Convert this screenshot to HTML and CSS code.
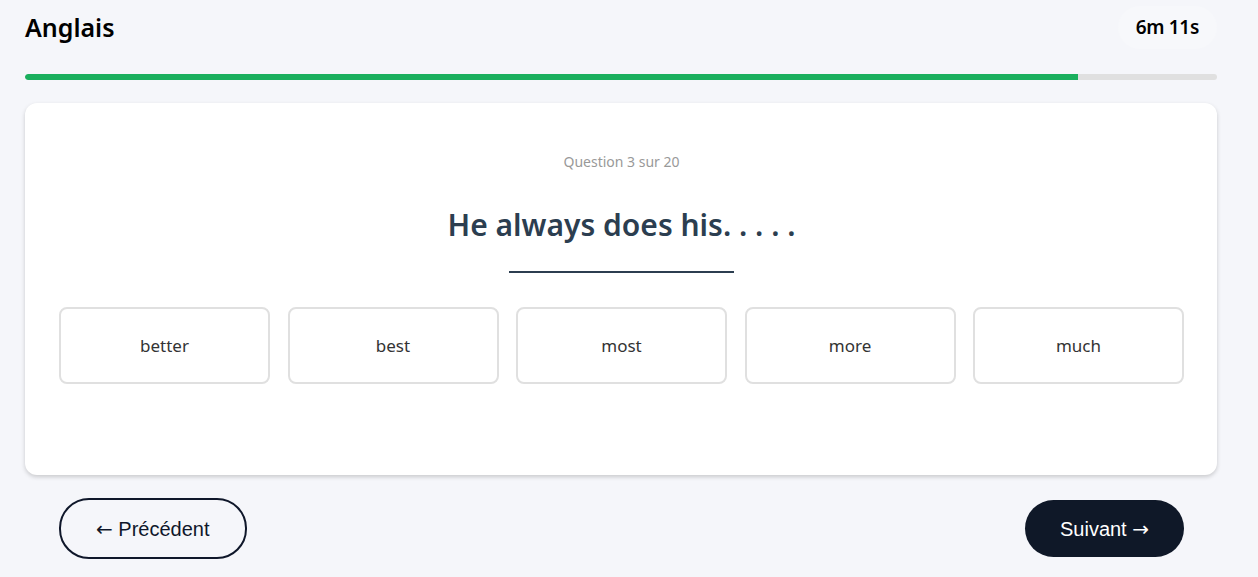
FILE: index.html
```html
<!DOCTYPE html>
<html lang="fr">
<head>
<meta charset="utf-8">
<title>Anglais</title>
<link rel="stylesheet" href="styles.css">
</head>
<body>
<div class="page">
  <header class="top">
    <h1 class="title">Anglais</h1>
    <div class="timer">6m 11s</div>
  </header>
  <div class="progress"><div class="progress-fill" style="width:88.34%"></div></div>
  <main class="card">
    <div class="counter">Question 3 sur 20</div>
    <h2 class="question">He always does his. . . . .</h2>
    <div class="rule"></div>
    <div class="options">
      <button class="option">better</button>
      <button class="option">best</button>
      <button class="option">most</button>
      <button class="option">more</button>
      <button class="option">much</button>
    </div>
  </main>
  <nav class="nav">
    <button class="btn btn-outline"><span class="arrow">←</span> Précédent</button>
    <button class="btn btn-dark">Suivant <span class="arrow">→</span></button>
  </nav>
</div>
</body>
</html>
```
FILE: styles.css
```css
* { box-sizing: border-box; }
html, body { margin: 0; padding: 0; }
body {
  background: #f5f6fa;
  font-family: "Noto Sans", "Open Sans", sans-serif;
  color: #111;
  width: 1258px;
  height: 577px;
  overflow: hidden;
}
.page {
  padding: 0 41px 0 25px;
}
.top {
  display: flex;
  justify-content: space-between;
  align-items: center;
  height: 54px;
}
.title {
  margin: 0;
  font-size: 25px;
  font-weight: 600;
  color: #000;
  line-height: 54px;
}
.timer {
  background: #f7f8fb;
  border-radius: 24px;
  padding: 8px 18px 9px;
  font-size: 19px;
  font-weight: 600;
  color: #000;
  letter-spacing: -0.3px;
}
.progress {
  margin-top: 20px;
  height: 6px;
  background: #e0e0e0;
  border-radius: 3px;
  overflow: hidden;
}
.progress-fill {
  height: 100%;
  background: #1aaf5d;
  border-radius: 3px 0 0 3px;
}
.card {
  margin-top: 23px;
  background: #fff;
  border-radius: 12px;
  box-shadow: 0 2px 4px rgba(0,0,0,0.18);
  padding: 48px 33px 91px 34px;
  display: flex;
  flex-direction: column;
  align-items: center;
}
.counter {
  font-size: 14px;
  color: #999;
  line-height: 22px;
}
.question {
  margin: 32px 0 0;
  font-size: 30px;
  font-weight: 600;
  color: #2c3e50;
  line-height: 40px;
}
.rule {
  width: 225px;
  height: 2px;
  background: #2c3e50;
  margin-top: 26px;
}
.options {
  margin-top: 34px;
  width: 100%;
  display: grid;
  grid-template-columns: repeat(5, 1fr);
  gap: 17.5px;
}
.option {
  height: 77px;
  background: #fff;
  border: 2px solid #e0e0e0;
  border-radius: 8px;
  font-family: "Noto Sans", "Open Sans", sans-serif;
  font-size: 17px;
  color: #333;
}
.nav {
  display: flex;
  justify-content: space-between;
  align-items: center;
  padding: 0 33px 0 34px;
  margin-top: 23px;
  height: 61px;
}
.btn {
  font-family: "Liberation Sans", Arial, sans-serif;
  font-size: 20px;
  border-radius: 30px;
  height: 57px;
}
.arrow {
  font-family: "DejaVu Sans", sans-serif;
  font-size: 20px;
}
.btn-outline {
  background: transparent;
  border: 2px solid #0f172a;
  color: #0f172a;
  height: 61px;
  padding: 0 35px;
}
.btn-dark {
  background: #0f1828;
  border: none;
  color: #fff;
  padding: 0 35px;
}
```
